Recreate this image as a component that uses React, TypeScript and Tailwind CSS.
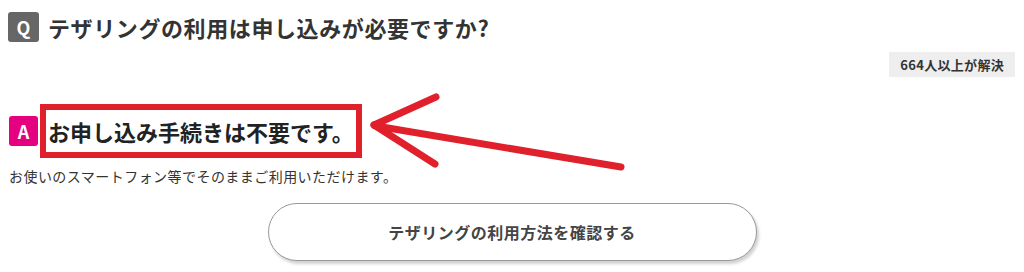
export default function App() {
  return (
    <div className="relative h-[272px] w-[1024px] overflow-hidden bg-white font-['Noto_Sans_CJK_JP',sans-serif] text-[#333]">
      {/* question */}
      <div className="flex items-center gap-[9px] pl-2 pt-3">
        <span className="flex h-[30px] w-[31px] items-center justify-center rounded-[3px] bg-[#666] text-[18px] font-bold leading-none text-white">
          Q
        </span>
        <h2 className="text-[22px] font-bold leading-[30px] tracking-[0.6px] text-[#333]">
          テザリングの利用は申し込みが必要ですか?
        </h2>
      </div>

      <div className="mt-[10px] flex justify-end pr-[9px]">
        <span className="flex h-[25px] items-center bg-[#eee] px-[11px] text-[13px] font-bold tracking-[0.3px] text-[#333]">
          664人以上が解決
        </span>
      </div>

      {/* answer */}
      <div className="mt-[27px] flex items-center pl-[9px]">
        <span className="flex h-[30px] w-[29px] items-center justify-center rounded-[3px] bg-[#e4007f] text-[18px] font-bold leading-none text-white">
          A
        </span>
        <div className="ml-[2px] border-[6px] border-[#e0202a] px-[2px] py-[6px]">
          <h3 className="text-[22px] font-bold leading-[30px] text-[#222]">
            お申し込み手続きは不要です。
          </h3>
        </div>
      </div>
      <p className="mt-[8px] pl-[9px] text-[14px] leading-[20px] tracking-[0.45px] text-[#333]">
        お使いのスマートフォン等でそのままご利用いただけます。
      </p>

      <div className="mt-[17px] flex justify-center">
        <button
          type="button"
          className="flex h-[58px] w-[489px] items-center justify-center rounded-full border border-[#999] bg-white text-[16px] font-bold tracking-[0.5px] text-[#444] shadow-[2px_3px_3px_rgba(0,0,0,0.18)]"
        >
          テザリングの利用方法を確認する
        </button>
      </div>

      {/* arrow annotation */}
      <svg
        className="pointer-events-none absolute left-0 top-0"
        width="1024"
        height="272"
        viewBox="0 0 1024 272"
      >
        <g stroke="#e0202a" strokeWidth="7" strokeLinecap="round" fill="none">
          <line x1="374" y1="125" x2="436" y2="97" />
          <line x1="374" y1="125" x2="435" y2="164" />
          <line x1="376" y1="126" x2="621" y2="167" />
        </g>
      </svg>
    </div>
  );
}
